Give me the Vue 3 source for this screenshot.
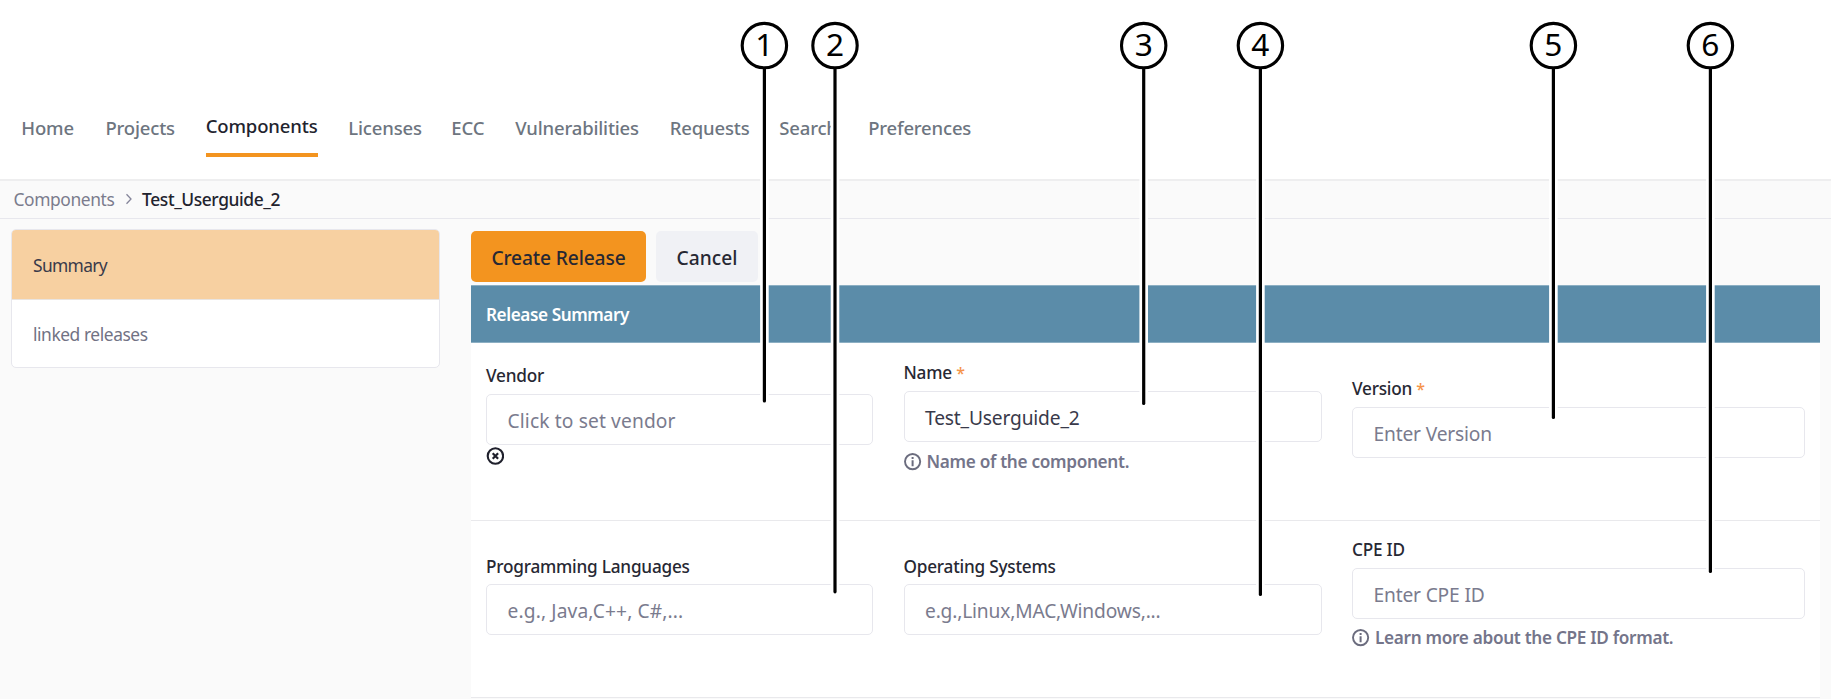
<script setup>
const navItems = ['Home', 'Projects', 'Components', 'Licenses', 'ECC', 'Vulnerabilities', 'Requests', 'Search', 'Preferences']

const rows = [
  [
    { id: 'vendor', label: 'Vendor', placeholder: 'Click to set vendor', wide: true, clear: true },
    { id: 'name', label: 'Name', required: true, value: 'Test_Userguide_2', help: 'Name of the component.' },
    { id: 'version', label: 'Version', required: true, placeholder: 'Enter Version' },
  ],
  [
    { id: 'languages', label: 'Programming Languages', placeholder: 'e.g., Java,C++, C#,...', wide: true },
    { id: 'systems', label: 'Operating Systems', placeholder: 'e.g.,Linux,MAC,Windows,...' },
    { id: 'cpe', label: 'CPE ID', placeholder: 'Enter CPE ID', help: 'Learn more about the CPE ID format.' },
  ],
]

// Numbered callouts: centre x and the y at which the leader line ends.
const callouts = [
  { n: 1, x: 764.4, end: 402.5 },
  { n: 2, x: 835, end: 593.3 },
  { n: 3, x: 1143.7, end: 405 },
  { n: 4, x: 1260.4, end: 596 },
  { n: 5, x: 1553.4, end: 419 },
  { n: 6, x: 1710.4, end: 573 },
]
</script>

<template>
  <div class="page">
    <header class="topbar">
      <nav class="nav">
        <a v-for="item in navItems" :key="item" class="nav-link" :class="{ active: item === 'Components' }">{{ item }}</a>
      </nav>
    </header>

    <div class="breadcrumb">
      <span>Components</span>
      <svg class="chevron" width="8" height="12" viewBox="0 0 8 12"><path d="M1.5 1.3 6 6 1.5 10.7" fill="none" stroke="#85859a" stroke-width="1.3" /></svg>
      <strong>Test_Userguide_2</strong>
    </div>

    <main class="body">
      <aside class="sidebar">
        <a class="side-item selected">Summary</a>
        <a class="side-item">linked releases</a>
      </aside>

      <section class="content">
        <div class="actions">
          <button class="btn primary">Create Release</button>
          <button class="btn secondary">Cancel</button>
        </div>
        <h2 class="panel-title">Release Summary</h2>
        <div v-for="(row, i) in rows" :key="i" class="form-row">
          <div v-for="f in row" :key="f.id" class="field" :class="f.id">
            <label class="label">{{ f.label }} <span v-if="f.required" class="req">*</span></label>
            <div class="input" :class="{ filled: f.value, wide: f.wide }">{{ f.value || f.placeholder }}</div>
            <svg v-if="f.clear" class="clear" width="18" height="18" viewBox="0 0 18 18" fill="none" stroke="#1f202c">
              <circle cx="9.4" cy="9" r="7.7" stroke-width="2.1" />
              <path d="M6.7 6.3l5.4 5.4M12.1 6.3l-5.4 5.4" stroke-width="2.2" />
            </svg>
            <div v-if="f.help" class="help">
              <svg width="18" height="18" viewBox="0 0 18 18" fill="none" stroke="#6b6c7e">
                <circle cx="8.6" cy="8.6" r="7.6" stroke-width="1.9" />
                <path d="M8.6 7.3v6M8.6 4v2" stroke-width="2" />
              </svg>
              <span>{{ f.help }}</span>
            </div>
          </div>
        </div>
      </section>
    </main>

    <svg class="callouts" width="1831" height="699" viewBox="0 0 1831 699">
      <g v-for="c in callouts" :key="c.n">
        <path :d="`M${c.x} 69V${c.end}`" stroke="#fff" stroke-width="8.6" />
        <path :d="`M${c.x} 68V${c.end - 1.5}`" stroke="#000" stroke-width="3.2" stroke-linecap="round" />
        <circle :cx="c.x" cy="45.6" r="22.2" fill="#fff" stroke="#000" stroke-width="3.1" />
        <text :x="c.x" y="55.7" text-anchor="middle">{{ c.n }}</text>
      </g>
    </svg>
  </div>
</template>

<style>
body { margin: 0; }
</style>

<style scoped>
.page {
  position: relative;
  width: 1831px;
  height: 699px;
  overflow: hidden;
  box-sizing: border-box;
  background: #fafafa;
  color: #272833;
  font-family: "Noto Sans", "Open Sans", sans-serif;
}
.page * { box-sizing: border-box; }
.topbar {
  height: 181px;
  padding: 115px 0 0 21.3px;
  background: #fff;
  border-bottom: 2px solid #eeeeef;
}
.nav {
  display: grid;
  grid-template-columns: 84.2px 100.2px 142.7px 103px 64px 154.5px 109.5px 88.8px 110px;
  justify-items: start;
  align-items: start;
}
.nav-link {
  font-size: 18.5px;
  line-height: 25px;
  font-weight: 500;
  letter-spacing: -0.18px;
  color: #6d7580;
}
.nav-link.active {
  width: 112px;
  margin-top: -2px;
  height: 44px;
  letter-spacing: -0.13px;
  border-bottom: 4px solid #f3941f;
  color: #22232e;
}
.breadcrumb {
  height: 38px;
  padding: 0 0 2px 13.5px;
  display: flex;
  align-items: center;
  border-bottom: 1px solid #e7e7ed;
  font-size: 17.4px;
  line-height: 26px;
  letter-spacing: -0.4px;
  color: #7b7c8d;
}
.breadcrumb strong { font-weight: 500; color: #22232e; }
.chevron { margin: 1px 9.3px 0 10.4px; flex: none; }
.body {
  display: flex;
  align-items: flex-start;
  padding-left: 11px;
}
.sidebar {
  width: 429px;
  margin-top: 10px;
  border: 1px solid #e7e7ed;
  border-radius: 5px;
  background: #fff;
  overflow: hidden;
}
.side-item {
  display: flex;
  align-items: center;
  height: 67.5px;
  padding: 0.5px 21px 0;
  font-size: 17.4px;
  letter-spacing: -0.44px;
  color: #717284;
}
.side-item.selected {
  height: 69.5px;
  background: #f7d0a1;
  border-bottom: 1px solid #e9e4e0;
  letter-spacing: -0.65px;
  color: #393a4a;
}
.content { width: 1349px; margin-left: 31px; padding-top: 12px; }
.actions { display: flex; gap: 10px; height: 54px; }
.btn {
  height: 51px;
  padding: 1px 0 0;
  border: 0;
  border-radius: 5px;
  font: 500 19.2px "Noto Sans", sans-serif;
  color: #272833;
}
.primary { width: 175px; background: #f3941f; letter-spacing: -0.13px; }
.secondary { width: 102px; background: #f0f1f5; }
.panel-title {
  height: 58px;
  margin: 0;
  padding: 0 15px;
  border-top: 1px solid #8cafc3;
  border-bottom: 1px solid #8cafc3;
  background: #5b8ca9;
  color: #fff;
  font-size: 17.2px;
  line-height: 58px;
  font-weight: 600;
  letter-spacing: -0.43px;
}
.form-row {
  height: 178px;
  padding: 0 15px;
  background: #fff;
  border-bottom: 1px solid #e9e9ec;
  display: grid;
  grid-template-columns: 387px 418px 453px;
  column-gap: 30.5px;
}
.form-row + .form-row { height: 177px; }
.vendor { padding-top: 20.6px; }
.name { padding-top: 18px; }
.version { padding-top: 33.5px; }
.languages, .systems { padding-top: 34px; }
.cpe { padding-top: 17px; }
.label {
  display: block;
  height: 24px;
  margin-bottom: 6px;
  font-size: 17.2px;
  line-height: 24px;
  font-weight: 500;
  letter-spacing: -0.22px;
}
.languages .label, .systems .label { margin-bottom: 5px; }
.req { font-size: 16px; color: #f5944a; }
.input {
  height: 51px;
  padding: 0 20.5px;
  border: 1px solid #e7e7ed;
  border-radius: 5px;
  background: #fff;
  font-size: 19.2px;
  line-height: 51px;
  letter-spacing: -0.17px;
  color: #7a7b8e;
  white-space: nowrap;
}
.wide { letter-spacing: 0.13px; }
.filled { color: #393a4a; }
.clear { display: block; margin: 2.9px 0 0; }
.help {
  display: flex;
  align-items: center;
  gap: 5px;
  height: 26px;
  margin-top: 6.5px;
  font-size: 17.2px;
  line-height: 26px;
  font-weight: 600;
  letter-spacing: -0.31px;
  color: #74758a;
}
.cpe .help { margin-top: 5.5px; }
.callouts {
  position: absolute;
  inset: 0;
  pointer-events: none;
}
.callouts text { font: 400 31.6px "Noto Sans", sans-serif; fill: #000; }
</style>
